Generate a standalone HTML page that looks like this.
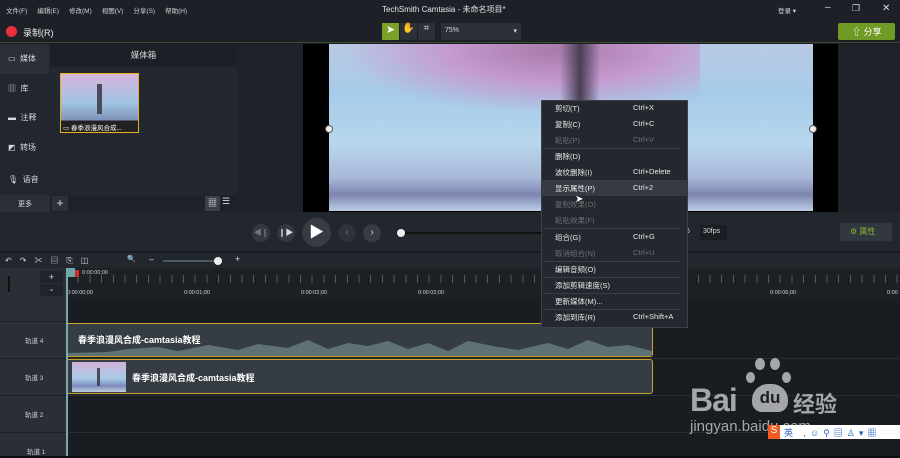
<!DOCTYPE html>
<html><head><meta charset="utf-8"><style>
*{margin:0;padding:0;box-sizing:border-box}
body{width:900px;height:458px;overflow:hidden;background:#1b1e23;font-family:"Liberation Sans","Noto Sans CJK SC",sans-serif;color:#d8dadd;position:relative;font-size:8px}
.a{position:absolute}
.menu span{margin-right:10px}
.mi{position:absolute;left:14px;font-size:7.5px;color:#e6e8ea}
.mk{position:absolute;left:92px;font-size:7.5px;color:#e6e8ea}
.dis{color:#6c7075!important}
.sep{position:absolute;left:2px;right:8px;height:1px;background:#3a3e44}
.tl{position:absolute;font-size:6.5px;color:#cfd2d5}
.toe{position:absolute;background:#a4a6a8;border-radius:50%}
</style></head><body>
<!-- title bar -->
<div class="a" style="left:0;top:0;width:900px;height:20px;background:#1d2026"></div>
<div class="a menu" style="left:6px;top:5px;font-size:6.5px;color:#cfd2d5"><span>文件(F)</span><span>编辑(E)</span><span>修改(M)</span><span>视图(V)</span><span>分享(S)</span><span>帮助(H)</span></div>
<div class="a" style="left:382px;top:4px;font-size:8px;color:#e4e6e8">TechSmith Camtasia - 未命名项目*</div>
<div class="a" style="left:778px;top:5px;font-size:6.5px">登录 ▾</div>
<div class="a" style="left:825px;top:2px;font-size:10px">–</div>
<div class="a" style="left:852px;top:3px;font-size:9px">❐</div>
<div class="a" style="left:882px;top:3px;font-size:10px">✕</div>
<!-- toolbar -->
<div class="a" style="left:0;top:20px;width:900px;height:23px;background:#1d2026;border-bottom:1px solid #3d4a2a"></div>
<div class="a" style="left:6px;top:26px;width:11px;height:11px;border-radius:50%;background:#e8313a"></div>
<div class="a" style="left:23px;top:26px;font-size:9px;color:#eee">录制(R)</div>
<div class="a" style="left:382px;top:23px;width:17px;height:17px;background:#7aa227;color:#fff;font-size:11px;text-align:center">➤</div>
<div class="a" style="left:400px;top:23px;width:17px;height:17px;background:#2c3038;text-align:center;font-size:10px">✋</div>
<div class="a" style="left:418px;top:23px;width:17px;height:17px;background:#2c3038;text-align:center;font-size:10px">⌗</div>
<div class="a" style="left:441px;top:23px;width:80px;height:17px;background:#2c3038;font-size:7px;padding:4px 4px">75%<span style="float:right">▾</span></div>
<div class="a" style="left:838px;top:23px;width:57px;height:17px;background:#6f9a23;border-radius:2px;color:#fff;font-size:9px;padding:2px 0 0 14px">⇧ 分享</div>
<!-- left sidebar -->
<div class="a" style="left:0;top:44px;width:50px;height:168px;background:#22262d"></div>
<div class="a" style="left:0;top:44px;width:49px;height:30px;background:#2b3037"></div>
<div class="a" style="left:8px;top:53px;font-size:8px">▭ &nbsp;媒体</div>
<div class="a" style="left:8px;top:83px;font-size:8px">▥ &nbsp;库</div>
<div class="a" style="left:8px;top:112px;font-size:8px">▬ &nbsp;注释</div>
<div class="a" style="left:8px;top:142px;font-size:8px">◩ &nbsp;转场</div>
<div class="a" style="left:8px;top:174px;font-size:8px">🎙 &nbsp;语音</div>
<div class="a" style="left:0;top:195px;width:50px;height:17px;background:#2b3037;font-size:7px;text-align:center;padding-top:4px">更多</div>
<!-- media bin -->
<div class="a" style="left:50px;top:44px;width:187px;height:168px;background:#232730"></div>
<div class="a" style="left:50px;top:44px;width:187px;height:23px;background:#1c1f25;text-align:center;font-size:8.5px;padding-top:5px">媒体箱</div>
<div class="a" style="left:60px;top:73px;width:79px;height:60px;border:1.5px solid #e5b21e;background:linear-gradient(#d8b6dc,#9fc4e4 50%,#7f92b8 80%,#222 80%)"></div>
<div class="a" style="left:97px;top:84px;width:5px;height:30px;background:#4a4a5a"></div>
<div class="a" style="left:63px;top:122px;font-size:6.5px;color:#fff">▭ 春季浪漫风合成...</div>
<div class="a" style="left:50px;top:195px;width:187px;height:17px;background:#1e2127"></div>
<div class="a" style="left:52px;top:196px;width:16px;height:15px;background:#2c3038;font-size:12px;text-align:center;line-height:14px">+</div>
<div class="a" style="left:205px;top:196px;width:15px;height:15px;background:#3a4048;font-size:9px;text-align:center">▦</div>
<div class="a" style="left:222px;top:196px;font-size:9px">☰</div>
<!-- canvas -->
<div class="a" style="left:237px;top:44px;width:663px;height:168px;background:#1f2228"></div>
<div class="a" style="left:303px;top:44px;width:535px;height:168px;background:#000"></div>
<div class="a" style="left:329px;top:44px;width:484px;height:167px;background:linear-gradient(180deg,#b9c9e4 0%,#a6cbe8 30%,#b8d7ee 60%,#a9b8d8 80%,#7e85b0 90%,#b9cde4 100%)"></div>
<div class="a" style="left:340px;top:44px;width:360px;height:70px;background:radial-gradient(ellipse at 60% 10%,#a87aa8 0%,#c49ad0 35%,rgba(200,180,220,0) 70%)"></div>
<div class="a" style="left:560px;top:44px;width:40px;height:60px;background:linear-gradient(90deg,rgba(60,50,70,0),#4a3e55,rgba(60,50,70,0))"></div>
<div class="a" style="left:325px;top:125px;width:8px;height:8px;border-radius:50%;border:1px solid #555;background:#eee"></div>
<div class="a" style="left:809px;top:125px;width:8px;height:8px;border-radius:50%;border:1px solid #555;background:#eee"></div>
<!-- playback -->
<div class="a" style="left:0;top:212px;width:900px;height:40px;background:#22262d;border-bottom:1px solid #15171b"></div>
<div class="a" style="left:252px;top:224px;width:18px;height:18px;border-radius:50%;background:#323740;font-size:8px;text-align:center;line-height:18px;color:#777">◀❙</div>
<div class="a" style="left:277px;top:224px;width:18px;height:18px;border-radius:50%;background:#323740;font-size:8px;text-align:center;line-height:18px">❙▶</div>
<div class="a" style="left:302px;top:218px;width:29px;height:29px;border-radius:50%;background:#363b44;font-size:15px;text-align:center;line-height:29px;color:#fff">▶</div>
<div class="a" style="left:338px;top:224px;width:18px;height:18px;border-radius:50%;background:#2e333b;font-size:10px;text-align:center;line-height:18px;color:#777">‹</div>
<div class="a" style="left:363px;top:224px;width:18px;height:18px;border-radius:50%;background:#363b44;font-size:10px;text-align:center;line-height:18px">›</div>
<div class="a" style="left:397px;top:229px;width:8px;height:8px;border-radius:50%;background:#eee"></div>
<div class="a" style="left:405px;top:232px;width:140px;height:2px;background:#111"></div>
<div class="a" style="left:686px;top:228px;font-size:7px">5</div>
<div class="a" style="left:700px;top:225px;width:27px;height:15px;background:#1a1d22;font-size:7px;padding:3px 3px">30fps</div>
<div class="a" style="left:840px;top:223px;width:52px;height:18px;background:#323740;border-radius:2px;font-size:8px;color:#8cb830;padding:3px 0 0 10px">⚙ 属性</div>
<!-- timeline toolbar -->
<div class="a" style="left:0;top:253px;width:900px;height:15px;background:#22262d;font-size:8px;color:#ccc"></div>
<div class="a" style="left:5px;top:255px;font-size:8px;letter-spacing:8px">↶↷✂▤⎘◫</div>
<div class="a" style="left:127px;top:255px;font-size:7px">🔍</div>
<div class="a" style="left:149px;top:254px;font-size:9px">–</div>
<div class="a" style="left:163px;top:260px;width:58px;height:2px;background:#4c5a60"></div>
<div class="a" style="left:214px;top:257px;width:8px;height:8px;border-radius:50%;background:#eee"></div>
<div class="a" style="left:235px;top:254px;font-size:9px">+</div>
<!-- track headers -->
<div class="a" style="left:0;top:268px;width:66px;height:190px;background:#2a2f36"></div>
<div class="a" style="left:40px;top:271px;width:23px;height:12px;background:#20242a;font-size:9px;text-align:center;line-height:12px">+</div>
<div class="a" style="left:40px;top:284px;width:23px;height:12px;background:#20242a;font-size:7px;text-align:center;line-height:12px">⌄</div>
<div class="a" style="left:8px;top:276px;width:2px;height:16px;background:#111"></div>
<div class="a" style="left:0;top:321px;width:66px;height:1px;background:#1b1e23"></div>
<div class="a" style="left:0;top:358px;width:66px;height:1px;background:#1b1e23"></div>
<div class="a" style="left:0;top:395px;width:66px;height:1px;background:#1b1e23"></div>
<div class="a" style="left:0;top:432px;width:66px;height:1px;background:#1b1e23"></div>
<div class="a tl" style="left:25px;top:335px">轨道 4</div>
<div class="a tl" style="left:25px;top:372px">轨道 3</div>
<div class="a tl" style="left:25px;top:409px">轨道 2</div>
<div class="a tl" style="left:27px;top:446px">轨道 1</div>
<!-- ruler -->
<div class="a" style="left:66px;top:268px;width:834px;height:30px;background:#1d2025"></div>
<div class="a" style="left:66px;top:275px;width:834px;height:8px;background:repeating-linear-gradient(90deg,#555b62 0 1px,transparent 1px 11.7px)"></div>
<div class="a" style="left:67px;top:268px;width:8px;height:9px;background:#6aa7a8"></div>
<div class="a" style="left:75px;top:270px;width:4px;height:7px;background:#d62a2a"></div>
<div class="a tl" style="left:82px;top:270px;font-size:5.5px">0:00:00;00</div>
<div class="a tl" style="left:67px;top:290px;font-size:5.5px">0:00:00;00</div>
<div class="a tl" style="left:184px;top:290px;font-size:5.5px">0:00:01;00</div>
<div class="a tl" style="left:301px;top:290px;font-size:5.5px">0:00:02;00</div>
<div class="a tl" style="left:418px;top:290px;font-size:5.5px">0:00:03;00</div>
<div class="a tl" style="left:770px;top:290px;font-size:5.5px">0:00:06;00</div>
<div class="a tl" style="left:887px;top:290px;font-size:5.5px">0:00</div>
<div class="a" style="left:66px;top:268px;width:2px;height:190px;background:#7aa9ab"></div>
<!-- tracks -->
<div class="a" style="left:68px;top:298px;width:832px;height:160px;background:#191c20"></div>
<div class="a" style="left:68px;top:358px;width:832px;height:1px;background:#2b2f35"></div>
<div class="a" style="left:68px;top:395px;width:832px;height:1px;background:#2b2f35"></div>
<div class="a" style="left:68px;top:432px;width:832px;height:1px;background:#2b2f35"></div>
<div class="a" style="left:68px;top:323px;width:585px;height:34px;background:#353c43;border:1px solid #c9a227;border-left:none;border-radius:0 3px 3px 0"></div>
<svg class="a" style="left:68px;top:335px" width="584" height="21"><path d="M0 21 L0 18 L40 17 L60 14 L90 12 L110 16 L140 10 L170 15 L190 9 L220 13 L240 5 L260 14 L280 8 L300 11 L320 6 L340 14 L360 8 L380 16 L400 6 L430 12 L450 15 L480 8 L500 14 L520 5 L540 12 L560 10 L584 16 L584 21Z" fill="#5e7275"/></svg>
<div class="a" style="left:78px;top:333px;font-size:9px;color:#fff;font-weight:bold">春季浪漫风合成-camtasia教程</div>
<div class="a" style="left:68px;top:359px;width:585px;height:35px;background:#353c43;border:1px solid #c9a227;border-left:none;border-radius:0 3px 3px 0"></div>
<div class="a" style="left:72px;top:362px;width:54px;height:30px;background:linear-gradient(#d0b2d8,#a8cbe8 55%,#7c8cbc 80%,#c0d0e0)"></div>
<div class="a" style="left:97px;top:368px;width:3px;height:18px;background:#4a4a5a"></div>
<div class="a" style="left:132px;top:371px;font-size:9px;color:#fff;font-weight:bold">春季浪漫风合成-camtasia教程</div>
<!-- context menu -->
<div class="a" style="left:541px;top:100px;width:147px;height:228px;background:#24272d;border:1px solid #3c4047"></div>
<div class="a" style="left:541px;top:180px;width:147px;height:16px;background:#363b42"></div>
<div class="a" style="left:541px;top:100px;width:147px;height:228px">
<div class="mi" style="top:3px">剪切(T)</div><div class="mk" style="top:3px">Ctrl+X</div>
<div class="mi" style="top:19px">复制(C)</div><div class="mk" style="top:19px">Ctrl+C</div>
<div class="mi dis" style="top:35px">粘贴(P)</div><div class="mk dis" style="top:35px">Ctrl+V</div>
<div class="sep" style="top:48px"></div>
<div class="mi" style="top:51px">删除(D)</div>
<div class="mi" style="top:67px">波纹删除(I)</div><div class="mk" style="top:67px">Ctrl+Delete</div>
<div class="mi" style="top:83px">显示属性(P)</div><div class="mk" style="top:83px">Ctrl+2</div>
<div class="mi dis" style="top:99px">复制效果(O)</div>
<div class="mi dis" style="top:115px">粘贴效果(F)</div>
<div class="sep" style="top:128px"></div>
<div class="mi" style="top:132px">组合(G)</div><div class="mk" style="top:132px">Ctrl+G</div>
<div class="mi dis" style="top:148px">取消组合(N)</div><div class="mk dis" style="top:148px">Ctrl+U</div>
<div class="sep" style="top:161px"></div>
<div class="mi" style="top:164px">编辑音频(O)</div>
<div class="sep" style="top:177px"></div>
<div class="mi" style="top:180px">添加剪辑速度(S)</div>
<div class="sep" style="top:193px"></div>
<div class="mi" style="top:196px">更新媒体(M)...</div>
<div class="sep" style="top:209px"></div>
<div class="mi" style="top:212px">添加到库(R)</div><div class="mk" style="top:212px">Ctrl+Shift+A</div>
</div>
<div class="a" style="left:575px;top:194px;font-size:10px;color:#fff">➤</div>
<!-- watermark -->
<div class="a" style="left:690px;top:382px;font-size:32px;font-weight:bold;color:#a4a6a8;letter-spacing:-1px">Bai</div>
<div class="toe" style="left:746px;top:372px;width:9px;height:11px"></div>
<div class="toe" style="left:755px;top:358px;width:10px;height:12px"></div>
<div class="toe" style="left:770px;top:358px;width:10px;height:12px"></div>
<div class="toe" style="left:782px;top:372px;width:9px;height:11px"></div>
<div class="a" style="left:752px;top:384px;width:36px;height:28px;background:#a4a6a8;border-radius:16px 16px 10px 10px;color:#1b1e23;font-size:17px;font-weight:bold;text-align:center;line-height:28px">du</div>
<div class="a" style="left:793px;top:387px;font-size:22px;font-weight:bold;color:#a4a6a8">经验</div>
<div class="a" style="left:690px;top:418px;font-size:15px;color:#a4a6a8">jingyan.baidu.com</div>
<div class="a" style="left:768px;top:425px;width:132px;height:14px;background:#fff"></div>
<div class="a" style="left:768px;top:425px;width:12px;height:14px;background:#f25a22;color:#fff;font-size:10px;text-align:center">S</div>
<div class="a" style="left:784px;top:426px;font-size:9px;color:#1d5fbf;letter-spacing:4px">英 ,☺⚲▤♙▾▦</div>
<div class="a" style="left:0;top:456px;width:900px;height:2px;background:#0e0f11"></div>
</body></html>
